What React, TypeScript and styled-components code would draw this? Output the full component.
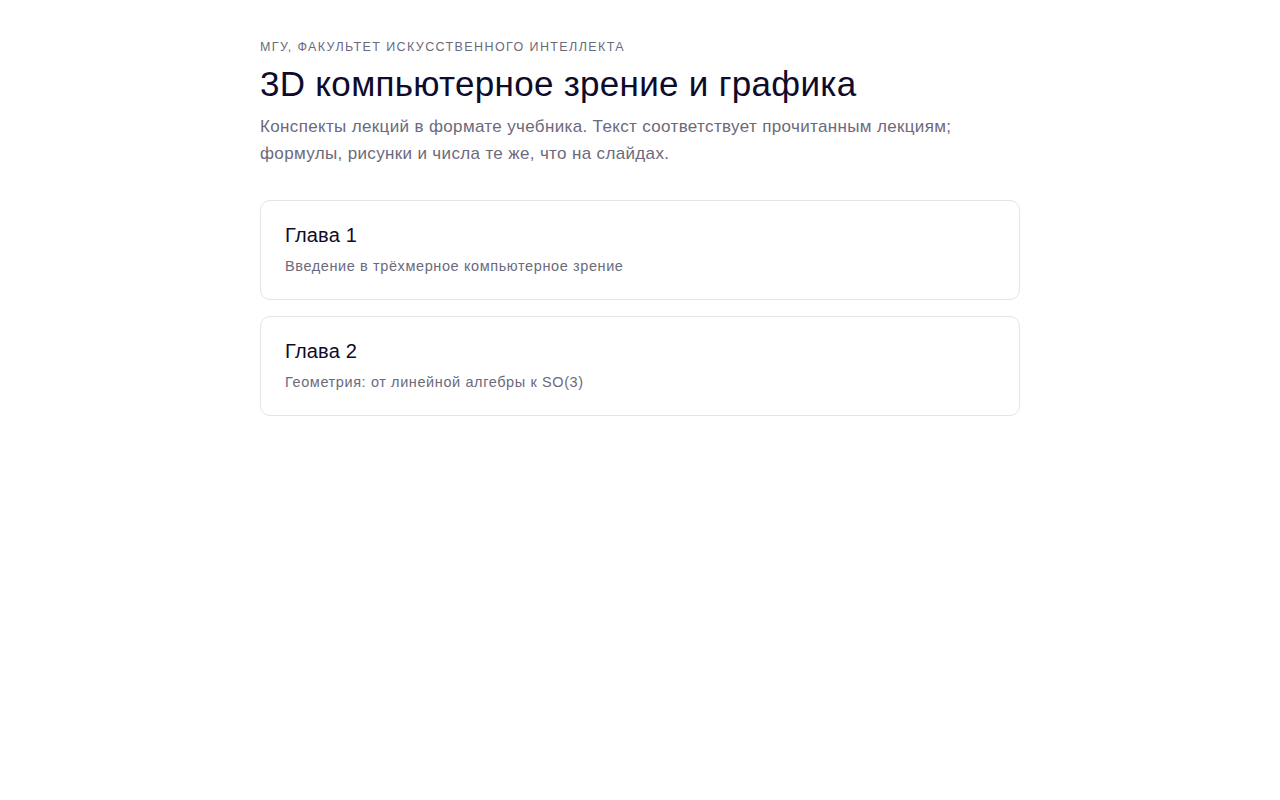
import * as React from 'react';
import styled, { createGlobalStyle } from 'styled-components';

const GlobalStyle = createGlobalStyle`
  html, body {
    margin: 0;
    padding: 0;
    background: #ffffff;
  }
  body {
    font-family: 'Liberation Sans', Arial, sans-serif;
    -webkit-font-smoothing: antialiased;
  }
`;

const Page = styled.main`
  width: 760px;
  margin: 0 auto;
  padding: 39px 0 60px;
`;

const Eyebrow = styled.div`
  font-size: 12.5px;
  letter-spacing: 1.4px;
  text-transform: uppercase;
  color: #6b6a7c;
  line-height: 16px;
`;

const Title = styled.h1`
  margin: 7px 0 0;
  font-size: 35px;
  font-weight: 400;
  letter-spacing: 0.3px;
  line-height: 44px;
  color: #0e0b2b;
`;

const Lead = styled.p`
  margin: 7px 0 0;
  font-size: 17px;
  letter-spacing: 0.35px;
  line-height: 27px;
  color: #6b6a7c;
`;

const ChapterList = styled.div`
  margin-top: 33px;
  display: flex;
  flex-direction: column;
  gap: 16px;
`;

const Card = styled.a`
  display: flex;
  flex-direction: column;
  box-sizing: border-box;
  height: 100px;
  padding: 22px 24px 0;
  border: 1px solid #e4e4ea;
  border-radius: 10px;
  text-decoration: none;
  cursor: pointer;
`;

const CardTitle = styled.div`
  font-size: 20px;
  letter-spacing: 0.2px;
  line-height: 24px;
  color: #0e0b2b;
`;

const CardText = styled.div`
  margin-top: 10px;
  font-size: 14.5px;
  letter-spacing: 0.6px;
  line-height: 18px;
  color: #6b6a7c;
`;

const chapters = [
  { title: 'Глава 1', text: 'Введение в трёхмерное компьютерное зрение' },
  { title: 'Глава 2', text: 'Геометрия: от линейной алгебры к SO(3)' },
];

export default function App() {
  return (
    <>
      <GlobalStyle />
      <Page>
        <Eyebrow>МГУ, Факультет искусственного интеллекта</Eyebrow>
        <Title>3D компьютерное зрение и графика</Title>
        <Lead>
          Конспекты лекций в формате учебника. Текст соответствует прочитанным лекциям;
          <br />
          формулы, рисунки и числа те же, что на слайдах.
        </Lead>
        <ChapterList>
          {chapters.map((c) => (
            <Card key={c.title}>
              <CardTitle>{c.title}</CardTitle>
              <CardText>{c.text}</CardText>
            </Card>
          ))}
        </ChapterList>
      </Page>
    </>
  );
}
